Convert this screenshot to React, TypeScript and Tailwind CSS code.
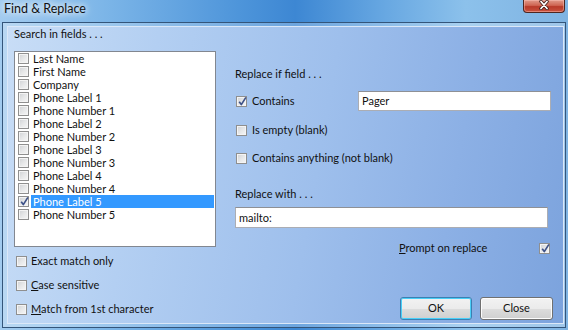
import React from 'react';

const fields = [
  'Last Name',
  'First Name',
  'Company',
  'Phone Label 1',
  'Phone Number 1',
  'Phone Label 2',
  'Phone Number 2',
  'Phone Label 3',
  'Phone Number 3',
  'Phone Label 4',
  'Phone Number 4',
  'Phone Label 5',
  'Phone Number 5',
];

function Box({ checked = false }: { checked?: boolean }) {
  return (
    <span className="relative block h-[11px] w-[11px] shrink-0 border border-[#8f8f8f] bg-[linear-gradient(135deg,#cfd1d4_0%,#e6e7e8_50%,#f7f7f7_100%)] shadow-[inset_0_0_0_1px_#f4f4f4]">
      {checked && (
        <svg viewBox="0 0 11 11" className="absolute left-[0px] top-[-1px] h-[11px] w-[11px] overflow-visible">
          <path d="M2.2 5.8 L4.3 8.6 L8.9 1.4" stroke="#3e5288" strokeWidth="1.7" fill="none" strokeLinejoin="round" />
        </svg>
      )}
    </span>
  );
}

export default function App() {
  return (
    <div className="h-[330px] w-[568px] overflow-hidden bg-[linear-gradient(90deg,#a2cbef_0%,#7db6e8_18%,#4e95da_42%,#3d87d3_52%,#68a8e2_68%,#8cc1eb_82%,#7fb3e2_100%)] font-['Lato',sans-serif] text-[11px] text-[#111]">
      {/* title bar */}
      <div className="flex h-[22px] items-start">
        <span className="pl-[4px] pt-[1px] text-[12.5px] leading-[16px] [text-shadow:0_0_6px_#fff,0_0_10px_#fff]">
          Find &amp; Replace
        </span>
        <div className="ml-auto mr-[3px] flex h-[13px] w-[42px] items-center justify-center rounded-b-[4px] border border-t-0 border-[#4f2620] bg-[linear-gradient(180deg,#e19a8a_0%,#cf6552_45%,#b83a29_55%,#c9533f_100%)] shadow-[inset_0_0_0_1px_rgba(255,200,190,0.45)]">
          <svg viewBox="0 0 12 10" className="h-[10px] w-[12px] -translate-y-[1px]">
            <path d="M3 1.5 L9 8.5 M9 1.5 L3 8.5" stroke="#3a1a16" strokeWidth="3.4" strokeLinecap="round" />
            <path d="M3 1.5 L9 8.5 M9 1.5 L3 8.5" stroke="#ffffff" strokeWidth="1.8" strokeLinecap="round" />
          </svg>
        </div>
      </div>

      {/* window frame */}
      <div className="ml-[2px] h-[306px] w-[564px] border border-[#34557a] bg-white/25 pb-[3px] pl-[4px] pr-[1px] pt-[3px]">
        <div className="flex h-full border border-[#dbe8f8] bg-[linear-gradient(100deg,#c8ddf6_0%,#b3cff2_25%,#9ebfec_55%,#8cb0e5_78%,#7ca3dd_100%)]">
          {/* left column */}
          <div className="flex w-[208px] flex-col pl-[6px]">
            <div className="h-[24px] leading-[14px]">Search in fields . . .</div>
            <div className="h-[196px] w-[202px] border border-[#828790] bg-white pl-[3px] pr-[1px]">
              {fields.map((f, i) => {
                const sel = i === 11;
                return (
                  <div key={f} className="flex h-[13px] items-center">
                    <Box checked={sel} />
                    <span
                      className={
                        'ml-[2px] h-[13px] flex-1 px-[2px] leading-[13px] ' +
                        (sel ? 'bg-[#3399ff] text-white' : '')
                      }
                    >
                      {f}
                    </span>
                  </div>
                );
              })}
            </div>
            <div className="mt-[2px]">
              <div className="flex h-[24px] items-center pl-[2px]">
                <Box />
                <span className="ml-[4px] leading-[14px]">Exact match only</span>
              </div>
              <div className="flex h-[24px] items-center pl-[2px]">
                <Box />
                <span className="ml-[4px] leading-[14px]">
                  <u>C</u>ase sensitive
                </span>
              </div>
              <div className="flex h-[24px] items-center pl-[2px]">
                <Box />
                <span className="ml-[4px] leading-[14px]">
                  <u>M</u>atch from 1st character
                </span>
              </div>
            </div>
          </div>

          {/* right column */}
          <div className="ml-[19px] flex w-[318px] flex-col">
            <div className="mt-[40px] leading-[14px]">Replace if field . . .</div>
            <div className="mt-[10px] flex h-[20px] items-center">
              <div className="flex w-[123px] items-center pl-[1px]">
                <Box checked />
                <span className="ml-[5px] leading-[14px]">Contains</span>
              </div>
              <div className="flex h-[20px] w-[193px] items-center border border-[#abadb3] border-t-[#8e9095] bg-white pl-[3px] leading-[14px]">
                Pager
              </div>
            </div>
            <div className="mt-[9px] flex h-[20px] items-center pl-[1px]">
              <Box />
              <span className="ml-[5px] leading-[14px]">Is empty (blank)</span>
            </div>
            <div className="mt-[8px] flex h-[20px] items-center pl-[1px]">
              <Box />
              <span className="ml-[5px] leading-[14px]">Contains anything (not blank)</span>
            </div>
            <div className="mt-[19px] leading-[14px]">Replace with . . .</div>
            <div className="mt-[6px] flex h-[21px] w-[313px] items-center border border-[#abadb3] border-t-[#8e9095] bg-white pl-[3px] leading-[14px]">
              mailto:
            </div>
            <div className="mt-[13px] flex h-[14px] items-center">
              <span className="pl-[164px] leading-[14px]">
                <u>P</u>rompt on replace
              </span>
              <span className="ml-auto mr-[3px]">
                <Box checked />
              </span>
            </div>
            <div className="mt-[42px] flex justify-end gap-[8px]">
              <button className="h-[23px] w-[72px] rounded-[3px] border border-[#3c7fb1] bg-[linear-gradient(180deg,#f2f2f2_0%,#ebebeb_50%,#dddddd_51%,#cfcfcf_100%)] text-[11px] shadow-[inset_0_0_0_1px_#48cff8]">
                OK
              </button>
              <button className="h-[23px] w-[73px] rounded-[3px] border border-[#707070] bg-[linear-gradient(180deg,#f2f2f2_0%,#ebebeb_50%,#dddddd_51%,#cfcfcf_100%)] text-[11px] shadow-[inset_0_0_0_1px_#fcfcfc]">
                Close
              </button>
            </div>
          </div>
        </div>
      </div>
    </div>
  );
}
